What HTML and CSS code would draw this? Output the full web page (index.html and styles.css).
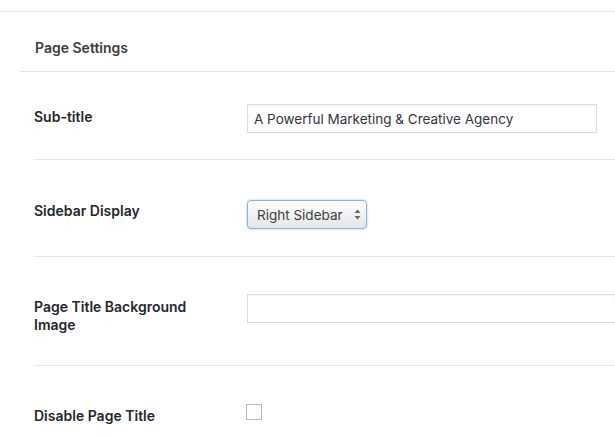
FILE: index.html
```html
<!DOCTYPE html>
<html lang="en">
<head>
    <meta charset="UTF-8">
    <meta name="viewport" content="width=device-width, initial-scale=1.0">
    <title>Page Settings</title>
    <link rel="stylesheet" href="styles.css">
</head>
<body>
    <div class="postbox">
        <h2 class="postbox-title">Page Settings</h2>
        <div class="settings">
            <div class="field-row row-subtitle">
                <label class="field-label" for="subtitle">Sub-title</label>
                <div class="field-input">
                    <input type="text" id="subtitle" class="text-input" value="A Powerful Marketing &amp; Creative Agency">
                </div>
            </div>
            <div class="field-row row-sidebar">
                <label class="field-label" for="sidebar">Sidebar Display</label>
                <div class="field-input">
                    <div class="select-box" id="sidebar">
                        <span>Right Sidebar</span>
                        <svg width="7" height="11" viewBox="0 0 7 11">
                            <path d="M3.5 0.5 L6.5 4 L0.5 4 Z" fill="#666"/>
                            <path d="M3.5 10.5 L6.5 7 L0.5 7 Z" fill="#666"/>
                        </svg>
                    </div>
                </div>
            </div>
            <div class="field-row row-bg">
                <label class="field-label" for="bgimage">Page Title Background Image</label>
                <div class="field-input">
                    <input type="text" id="bgimage" class="text-input wide">
                </div>
            </div>
            <div class="field-row row-disable">
                <label class="field-label" for="disable">Disable Page Title</label>
                <div class="field-input">
                    <span class="checkbox" id="disable"></span>
                </div>
            </div>
        </div>
    </div>
</body>
</html>
```

FILE: styles.css
```css
body {
    margin: 0;
    padding: 0;
    background: #fff;
    font-family: 'Inter', 'Liberation Sans', sans-serif;
    color: #23282d;
    overflow: hidden;
}

.postbox {
    margin-top: 11px;
    border-top: 1px solid #e5e5e5;
}

.postbox-title {
    margin: 0 0 0 20px;
    height: 60px;
    padding-left: 15px;
    box-sizing: border-box;
    line-height: 71px;
    font-size: 14px;
    font-weight: 600;
    color: #3d3d3d;
    border-bottom: 1px solid #e5e5e5;
}

.settings {
    padding-left: 34px;
}

.field-row {
    display: flex;
    align-items: flex-start;
    border-bottom: 1px solid #e8e8e8;
}

.field-row:last-child {
    border-bottom: none;
}

.field-label {
    width: 213px;
    flex-shrink: 0;
    font-size: 14px;
    font-weight: 600;
    line-height: 18px;
    padding-right: 40px;
    box-sizing: border-box;
}

.row-subtitle {
    padding: 32px 0 26px;
}

.row-subtitle .field-label {
    margin-top: 4px;
}

.row-sidebar {
    padding: 40px 0 27px;
}

.row-sidebar .field-label {
    margin-top: 2px;
}

.row-bg {
    padding: 37px 0 31px;
}

.row-bg .field-label {
    margin-top: 4px;
}

.row-disable {
    padding: 38px 0 20px;
}

.row-disable .field-label {
    margin-top: 3px;
}

.field-input {
    flex: 1;
    min-width: 0;
}

.text-input {
    display: block;
    width: 350px;
    height: 29px;
    box-sizing: border-box;
    margin: 0;
    padding: 0 6px;
    border: 1px solid #ddd;
    border-radius: 0;
    box-shadow: inset 0 1px 2px rgba(0, 0, 0, 0.04);
    font-family: 'Inter', 'Liberation Sans', sans-serif;
    font-size: 13.5px;
    color: #32373c;
    outline: none;
}

.text-input.wide {
    width: 100%;
    border-right: none;
}

.select-box {
    display: flex;
    align-items: center;
    justify-content: space-between;
    width: 120px;
    height: 29px;
    box-sizing: border-box;
    padding: 0 5px 0 9px;
    border: 1px solid #8eb2d4;
    border-radius: 4px;
    background: linear-gradient(#ffffff, #e6e6e6);
    box-shadow: 0 0 2px rgba(80, 150, 220, 0.6);
    font-size: 13.5px;
    color: #3a3f44;
}

.checkbox {
    display: block;
    width: 16px;
    height: 16px;
    box-sizing: border-box;
    margin-left: -1px;
    border: 1px solid #b4b9be;
    background: #fff;
}
```
